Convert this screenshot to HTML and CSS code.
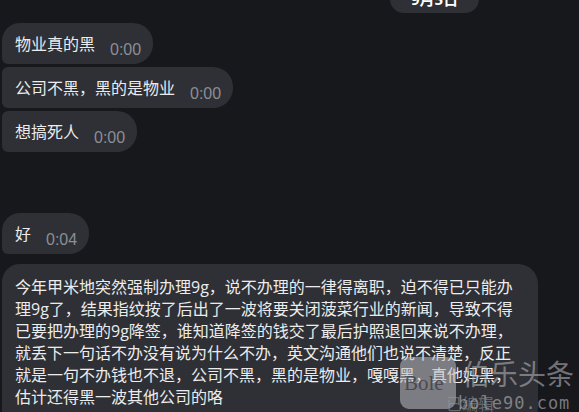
FILE: index.html
```html
<!DOCTYPE html>
<html lang="zh-CN">
<head>
    <meta charset="UTF-8">
    <meta name="viewport" content="width=device-width, initial-scale=1.0">
    <title>聊天</title>
    <link rel="stylesheet" href="styles.css">
</head>
<body>

    <div class="chat">
        <div class="date">9月5日</div>

        <div class="group">
            <div class="bubble first">
                <span class="text">物业真的黑</span>
                <span class="time">0:00</span>
            </div>
            <div class="bubble">
                <span class="text">公司不黑，黑的是物业</span>
                <span class="time">0:00</span>
            </div>
            <div class="bubble">
                <span class="text">想搞死人</span>
                <span class="time">0:00</span>
            </div>
        </div>

        <div class="group later">
            <div class="bubble first">
                <span class="text">好</span>
                <span class="time">0:04</span>
            </div>
        </div>

        <div class="group">
            <div class="bubble first long">
                <p class="text">今年甲米地突然强制办理9g，说不办理的一律得离职，迫不得已只能办<br>理9g了，结果指纹按了后出了一波将要关闭菠菜行业的新闻，导致不得<br>已要把办理的9g降签，谁知道降签的钱交了最后护照退回来说不办理，<br>就丢下一句话不办没有说为什么不办，英文沟通他们也说不清楚，反正<br>就是一句不办钱也不退，公司不黑，黑的是物业，嘎嘎黑，真他妈黑，<br>估计还得黑一波其他公司的咯</p>
            </div>
        </div>
    </div>

    <div class="watermark">
        <div class="logo">Bole</div>
        <div class="brand">伯乐头条</div>
        <div class="edited">已编辑</div>
        <div class="site">bole90.com</div>
    </div>

</body>
</html>
```

FILE: styles.css
```css
html, body{
    margin: 0;
    height: 100%;
    overflow: hidden;
}

body{
    background-color: #17181c;
    color: #ececec;
    font-family: "Open Sans", "Noto Sans CJK SC", sans-serif;
    font-size: 16px;
}

.chat{
    display: flex;
    flex-direction: column;
    align-items: flex-start;
    gap: 10px;
    padding-left: 2px;
}

.date{
    margin-top: -15px;
    margin-left: 388px;
    height: 28px;
    line-height: 28px;
    padding: 0 21px;
    border-radius: 14px;
    background-color: #2e3036;
    font-weight: bold;
    font-size: 15px;
    color: #ffffff;
}

.group{
    display: flex;
    flex-direction: column;
    align-items: flex-start;
    gap: 3px;
}

.later{
    margin-top: 51px;
}

.bubble{
    display: flex;
    align-items: flex-end;
    height: 41px;
    padding: 0 12px 0 13px;
    background-color: #2e3036;
    border-radius: 6px 20px 20px 6px;
    box-sizing: border-box;
}

.bubble.first{
    border-top-left-radius: 18px;
}

.text{
    align-self: center;
    line-height: 22px;
    margin: 0;
}

.time{
    margin-left: 15px;
    margin-bottom: 6px;
    line-height: 16px;
    font-family: "Liberation Sans", sans-serif;
    font-size: 16px;
    color: #8b8e94;
}

.long{
    height: auto;
    padding: 12px 25px 20px 13px;
}

.long .text{
    align-self: flex-start;
}

/* watermark over the corner */
.watermark{
    position: absolute;
    left: 398px;
    top: 355px;
    width: 181px;
    height: 57px;
    white-space: nowrap;
}

.logo{
    position: absolute;
    left: 2px;
    top: 2px;
    width: 56px;
    height: 52px;
    border-radius: 9px;
    background-color: rgba(190, 190, 194, 0.55);
    color: rgba(60, 60, 64, 0.8);
    font-family: "Liberation Serif", serif;
    font-size: 21px;
    line-height: 52px;
    text-indent: 4px;
}

.brand{
    position: absolute;
    left: 64px;
    top: 0;
    font-size: 28px;
    line-height: 38px;
    color: rgba(175, 176, 180, 0.6);
}

.edited{
    position: absolute;
    left: 48px;
    top: 39px;
    font-size: 16px;
    line-height: 20px;
    color: rgba(150, 152, 158, 0.55);
}

.site{
    position: absolute;
    left: 60px;
    top: 38px;
    font-family: "DejaVu Sans Mono", monospace;
    font-size: 17px;
    line-height: 20px;
    letter-spacing: 1px;
    color: rgba(175, 176, 180, 0.65);
}
```
